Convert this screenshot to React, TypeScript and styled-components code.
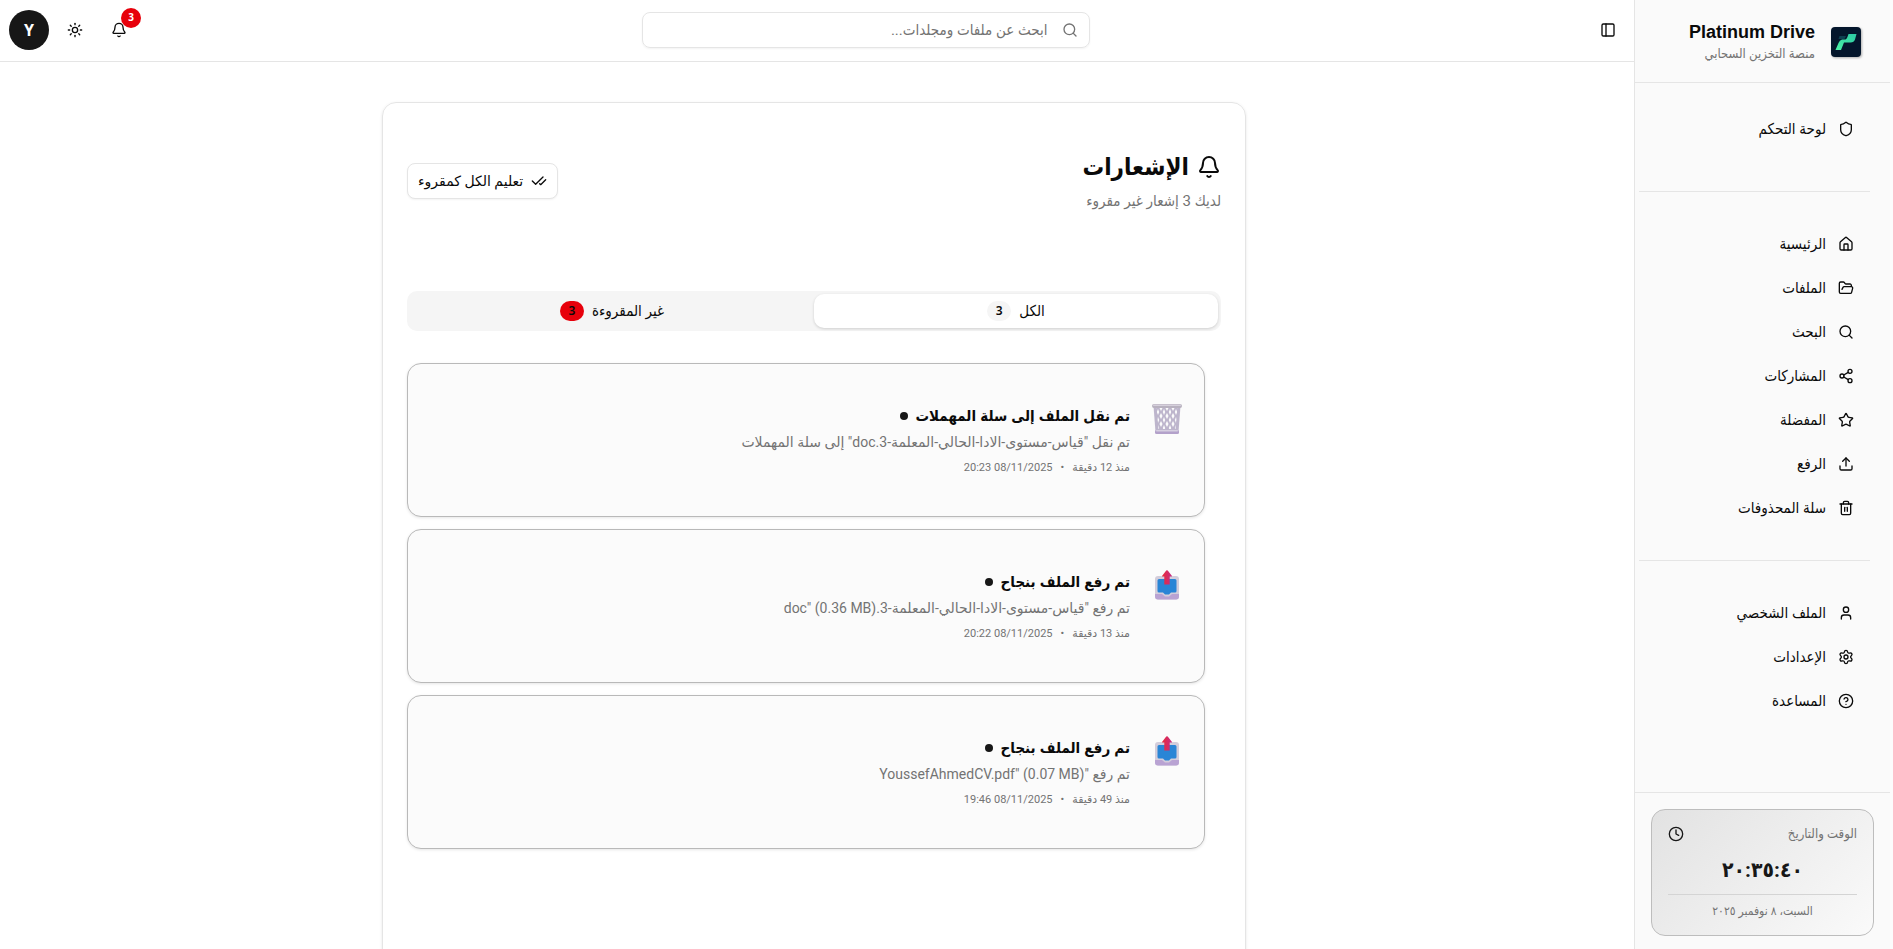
import React from 'react';
import styled, { createGlobalStyle, css } from 'styled-components';
import {
  Bell, CheckCheck, CircleHelp, Clock, FolderOpen, House, PanelLeft, Search,
  Settings, Share2, Shield, Star, Sun, Trash2, Upload, User,
} from 'lucide-react';

const wideStack = 'Roboto, "DejaVu Sans", sans-serif';

const GlobalStyle = createGlobalStyle`
  *, *::before, *::after { box-sizing: border-box; }
  body {
    margin: 0;
    background: #fff;
    color: #0a0a0a;
    font: 15px/20px Roboto, "DejaVu Sans Condensed", "DejaVu Sans", sans-serif;
  }
  h1, h2, p, ul { margin: 0; padding: 0; }
  ul { list-style: none; }
  button, input { font: inherit; color: inherit; }
  a { color: inherit; text-decoration: none; }
`;

const Shell = styled.div`
  display: flex;
  height: 100vh;
  padding-right: 3px;
  background: #fcfcfc;
`;

const Sidebar = styled.aside`
  display: flex;
  flex-direction: column;
  flex: none;
  width: 256px;
  border-left: 1px solid #e5e5e5;
  background: #fafafa;
`;

const Brand = styled.div`
  display: flex;
  align-items: center;
  gap: 16px;
  height: 83px;
  padding: 1px 29px 0;
  border-bottom: 1px solid #e5e5e5;
  svg { filter: drop-shadow(1px 1px 1px rgba(0, 0, 0, 0.3)); }
`;

const BrandName = styled.h2`
  font-family: "Liberation Sans", sans-serif;
  font-size: 18px;
  line-height: 24px;
  font-weight: 700;
`;

const BrandNote = styled.p`
  font-size: 13px;
  line-height: 20px;
  color: #737373;
`;

const Nav = styled.nav`
  flex: 1;
  min-height: 0;
  overflow: hidden;
  padding: 0 20px 0 4px;
`;

const NavGroup = styled.ul<{ $lead?: boolean }>`
  display: flex;
  flex-direction: column;
  gap: 8px;
  padding: ${(p) => (p.$lead ? '28px 0 44px' : '34px 0')};
  & + & { border-top: 1px solid #e5e5e5; }
`;

const NavLink = styled.a`
  display: flex;
  align-items: center;
  gap: 12px;
  height: 36px;
  padding: 0 16px;
`;

const SidebarFooter = styled.div`
  padding: 16px 16px 13px;
  border-top: 1px solid #e5e5e5;
`;

const ClockCard = styled.section`
  padding: 16px;
  border: 1px solid #bdbdbd;
  border-radius: 14px;
  background: linear-gradient(135deg, #e2e2e2, #fafafa);
  text-align: center;
  font-size: 12px;
  line-height: 16px;
  color: #737373;
`;

const ClockHead = styled.div`
  display: flex;
  align-items: center;
  justify-content: space-between;
  height: 16px;
  font-size: 13px;
  svg { color: #171717; }
`;

const ClockTime = styled.p`
  margin: 12px 0 8px;
  font-size: 21px;
  line-height: 32px;
  font-weight: 700;
  color: #171717;
`;

const ClockDate = styled.p`
  padding-top: 8px;
  border-top: 1px solid #d4d4d4;
`;

const Column = styled.div`
  display: flex;
  flex-direction: column;
  flex: 1;
  min-width: 0;
  background: #fff;
`;

const TopBar = styled.header`
  display: flex;
  align-items: center;
  flex: none;
  height: 62px;
  padding: 0 8px 1px 9px;
  border-bottom: 1px solid #e5e5e5;
`;

const IconButton = styled.button`
  position: relative;
  display: flex;
  align-items: center;
  justify-content: center;
  width: 36px;
  height: 36px;
  padding: 0;
  border: 0;
  background: none;
`;

const SearchSlot = styled.div`
  display: flex;
  justify-content: center;
  flex: 1;
  padding-left: 4px;
`;

const SearchBox = styled.label`
  display: flex;
  align-items: center;
  gap: 14px;
  width: 448px;
  height: 36px;
  padding: 0 11px;
  border: 1px solid #e5e5e5;
  border-radius: 8px;
  box-shadow: 0 1px 2px rgba(0, 0, 0, 0.05);
  color: #737373;
`;

const SearchInput = styled.input`
  flex: 1;
  min-width: 0;
  padding: 0;
  border: 0;
  outline: 0;
  background: none;
  &::placeholder { color: #737373; opacity: 1; }
`;

const Actions = styled.div`
  display: flex;
  align-items: center;
  gap: 8px;
`;

const CountDot = styled.span`
  position: absolute;
  top: -4px;
  right: -4px;
  width: 20px;
  height: 20px;
  border-radius: 50%;
  background: #e7000b;
  color: #fff;
  font: 700 10px/18px "Noto Sans", sans-serif;
  text-align: center;
`;

const Avatar = styled.button`
  width: 40px;
  height: 40px;
  padding: 0;
  border: 0;
  border-radius: 50%;
  background: #171717;
  color: #fff;
  font: 700 16px/40px "Noto Sans", sans-serif;
`;

const Main = styled.main`
  flex: 1;
  min-height: 0;
  overflow: hidden;
  padding: 40px 22px 0 16px;
`;

const Panel = styled.section`
  max-width: 864px;
  min-height: 900px;
  margin: 0 auto;
  padding: 48px 24px;
  border: 1px solid #e5e5e5;
  border-radius: 14px;
  box-shadow: 0 1px 3px rgba(0, 0, 0, 0.1);
`;

const PanelHead = styled.div`
  display: flex;
  align-items: center;
  justify-content: space-between;
  height: 60px;
`;

const PanelTitle = styled.h1`
  display: flex;
  align-items: center;
  gap: 8px;
  font-size: 24px;
  line-height: 32px;
  font-weight: 700;
`;

const PanelNote = styled.p`
  margin-top: 8px;
  color: #737373;
`;

const OutlineButton = styled.button`
  display: flex;
  align-items: center;
  gap: 8px;
  height: 36px;
  padding: 0 10px;
  border: 1px solid #e5e5e5;
  border-radius: 8px;
  background: #fff;
  box-shadow: 0 1px 2px rgba(0, 0, 0, 0.05);
  font-family: ${wideStack};
  font-size: 14px;
`;

const Tabs = styled.div`
  display: grid;
  grid-template-columns: 1fr 1fr;
  height: 40px;
  margin: 80px 0 32px;
  padding: 3px;
  border-radius: 10px;
  background: #f5f5f5;
`;

const Tab = styled.button<{ $active?: boolean }>`
  display: flex;
  align-items: center;
  justify-content: center;
  gap: 8px;
  padding: 0;
  border: 0;
  border-radius: 10px;
  background: none;
  ${(p) => p.$active && css`
    background: #fff;
    box-shadow: 0 1px 3px rgba(0, 0, 0, 0.16);
  `}
`;

const TabCount = styled.span<{ $alert?: boolean }>`
  width: 24px;
  height: 20px;
  border-radius: 10px;
  background: ${(p) => (p.$alert ? '#e7000b' : '#f5f5f5')};
  font: 600 12px/20px "Noto Sans", sans-serif;
`;

const Feed = styled.ul`
  display: flex;
  flex-direction: column;
  gap: 12px;
  padding-right: 16px;
`;

const Notice = styled.li`
  display: flex;
  gap: 22px;
  padding: 40px 22px;
  border: 1px solid #b9b9b9;
  border-radius: 14px;
  background: #fbfbfb;
  box-shadow: 0 1px 3px rgba(0, 0, 0, 0.1);
  color: #737373;
`;

const NoticeTitle = styled.h2`
  display: flex;
  align-items: center;
  gap: 8px;
  font-family: "Liberation Sans", "DejaVu Sans Condensed", "DejaVu Sans", sans-serif;
  font-size: 15px;
  line-height: 24px;
  font-weight: 700;
  color: #0a0a0a;
  &::after {
    content: "";
    width: 8px;
    height: 8px;
    border-radius: 50%;
    background: #171717;
  }
`;

const NoticeText = styled.p`
  margin: 4px 0 8px;
  font-family: ${wideStack};
  font-size: 14px;
`;

const NoticeMeta = styled.p`
  display: flex;
  gap: 8px;
  font-family: ${wideStack};
  font-size: 11px;
  line-height: 16px;
`;

const Logo = () => (
  <svg width="30" height="30" viewBox="0 0 30 30" aria-hidden="true">
    <defs>
      <linearGradient id="mark" x1="0" y1="1" x2="1" y2="0">
        <stop offset="0" stopColor="#4af0a4" />
        <stop offset="1" stopColor="#2cc9a4" />
      </linearGradient>
    </defs>
    <rect width="30" height="30" rx="4" fill="#04162c" />
    <path d="M8.500 9H15L13.500 12H7.500Z" fill="#0d4050" />
    <path d="M17.500 7H25.500L24 12.500Q23 15.500 19.500 15.500H13L10 23H4.500L7.500 16Q8.500 13 11 12.500H14.500Q16 12 17.500 7Z" fill="url(#mark)" />
  </svg>
);

const BasketArt = () => (
  <svg width="30" height="30" viewBox="0 0 30 30" aria-hidden="true">
    <defs>
      <pattern id="mesh" width="6" height="8" patternUnits="userSpaceOnUse">
        <path d="M3 1L4.500 4L3 7L1.500 4Z" fill="#fbfbfb" />
        <path d="M0 -3L1.200 0L0 3ZM6 -3L4.800 0L6 3ZM0 5L1.200 8L0 11ZM6 5L4.800 8L6 11Z" fill="#fbfbfb" />
      </pattern>
    </defs>
    <path d="M1.500 2H28.500L26.500 28H3.500Z" fill="#bdb5cc" />
    <path d="M4.500 4H25.500L23.500 25H6.500Z" fill="url(#mesh)" />
    <rect x="0" y="0" width="30" height="4" rx="2" fill="#b8b1bf" />
    <rect x="1" y="0.500" width="28" height="1.500" rx="0.700" fill="#d6d0dc" />
    <rect x="3" y="26" width="24" height="4" rx="1.500" fill="#b3a1ca" />
    <rect x="4" y="26" width="22" height="1.500" rx="0.700" fill="#d6cfe0" />
  </svg>
);

const OutboxArt = () => (
  <svg width="30" height="30" viewBox="0 0 30 30" aria-hidden="true">
    <defs>
      <linearGradient id="arrow" x1="0" y1="0" x2="1" y2="0">
        <stop offset="0" stopColor="#ea2a37" />
        <stop offset="1" stopColor="#c42c86" />
      </linearGradient>
    </defs>
    <rect x="3" y="6" width="24" height="23.500" rx="3" fill="#d3cddb" />
    <path d="M3 24H10L13 26.500H17L20 24H27V26.500Q27 29.500 24 29.500H6Q3 29.500 3 26.500Z" fill="#b9a3d3" />
    <path d="M7 9H23Q24.500 9 24.500 10.500V21Q24.500 22.500 23 22.500H19L17 24.500H13L11 22.500H7Q5.500 22.500 5.500 21V10.500Q5.500 9 7 9Z" fill="#2985d6" />
    <path d="M15 0Q15.600 0 20 6Q20 6.500 19.500 6.500H17.700V14.500H12.300V6.500H10.500Q10 6.500 10 6Q14.400 0 15 0Z" fill="url(#arrow)" />
  </svg>
);

const navGroups = [
  [{ icon: Shield, label: 'لوحة التحكم' }],
  [
    { icon: House, label: 'الرئيسية' },
    { icon: FolderOpen, label: 'الملفات' },
    { icon: Search, label: 'البحث' },
    { icon: Share2, label: 'المشاركات' },
    { icon: Star, label: 'المفضلة' },
    { icon: Upload, label: 'الرفع' },
    { icon: Trash2, label: 'سلة المحذوفات' },
  ],
  [
    { icon: User, label: 'الملف الشخصي' },
    { icon: Settings, label: 'الإعدادات' },
    { icon: CircleHelp, label: 'المساعدة' },
  ],
];

const notices = [
  {
    art: BasketArt,
    title: 'تم نقل الملف إلى سلة المهملات',
    text: 'تم نقل "قياس-مستوى-الادا-الحالي-المعلمة-3.doc" إلى سلة المهملات',
    ago: 'منذ 12 دقيقة',
    date: '08/11/2025 20:23',
  },
  {
    art: OutboxArt,
    title: 'تم رفع الملف بنجاح',
    text: 'تم رفع "قياس-مستوى-الادا-الحالي-المعلمة-3.doc" (0.36 MB)',
    ago: 'منذ 13 دقيقة',
    date: '08/11/2025 20:22',
  },
  {
    art: OutboxArt,
    title: 'تم رفع الملف بنجاح',
    text: 'تم رفع "YoussefAhmedCV.pdf" (0.07 MB)',
    ago: 'منذ 49 دقيقة',
    date: '08/11/2025 19:46',
  },
];

export default function App() {
  return (
    <>
      <GlobalStyle />
      <Shell dir="rtl" lang="ar">
        <Sidebar>
          <Brand>
            <Logo />
            <div>
              <BrandName>Platinum Drive</BrandName>
              <BrandNote>منصة التخزين السحابي</BrandNote>
            </div>
          </Brand>
          <Nav>
            {navGroups.map((group, i) => (
              <NavGroup key={i} $lead={i === 0}>
                {group.map(({ icon: Icon, label }) => (
                  <li key={label}>
                    <NavLink href="#"><Icon size={16} />{label}</NavLink>
                  </li>
                ))}
              </NavGroup>
            ))}
          </Nav>
          <SidebarFooter>
            <ClockCard>
              <ClockHead>الوقت والتاريخ<Clock size={16} /></ClockHead>
              <ClockTime>٢٠:٣٥:٤٠</ClockTime>
              <ClockDate>السبت، ٨ نوفمبر ٢٠٢٥</ClockDate>
            </ClockCard>
          </SidebarFooter>
        </Sidebar>
        <Column>
          <TopBar>
            <IconButton aria-label="الشريط الجانبي"><PanelLeft size={16} /></IconButton>
            <SearchSlot>
              <SearchBox>
                <Search size={16} />
                <SearchInput type="text" placeholder="ابحث عن ملفات ومجلدات..." />
              </SearchBox>
            </SearchSlot>
            <Actions>
              <IconButton aria-label="الإشعارات"><Bell size={16} /><CountDot>3</CountDot></IconButton>
              <IconButton aria-label="المظهر"><Sun size={16} /></IconButton>
              <Avatar>Y</Avatar>
            </Actions>
          </TopBar>
          <Main>
            <Panel>
              <PanelHead>
                <div>
                  <PanelTitle><Bell size={24} />الإشعارات</PanelTitle>
                  <PanelNote>لديك 3 إشعار غير مقروء</PanelNote>
                </div>
                <OutlineButton><CheckCheck size={16} />تعليم الكل كمقروء</OutlineButton>
              </PanelHead>
              <Tabs role="tablist">
                <Tab role="tab" aria-selected="true" $active>الكل<TabCount>3</TabCount></Tab>
                <Tab role="tab" aria-selected="false">غير المقروءة<TabCount $alert>3</TabCount></Tab>
              </Tabs>
              <Feed>
                {notices.map(({ art: Art, title, text, ago, date }) => (
                  <Notice key={date}>
                    <Art />
                    <div>
                      <NoticeTitle>{title}</NoticeTitle>
                      <NoticeText>{text}</NoticeText>
                      <NoticeMeta><span>{ago}</span><span>•</span><span>{date}</span></NoticeMeta>
                    </div>
                  </Notice>
                ))}
              </Feed>
            </Panel>
          </Main>
        </Column>
      </Shell>
    </>
  );
}
